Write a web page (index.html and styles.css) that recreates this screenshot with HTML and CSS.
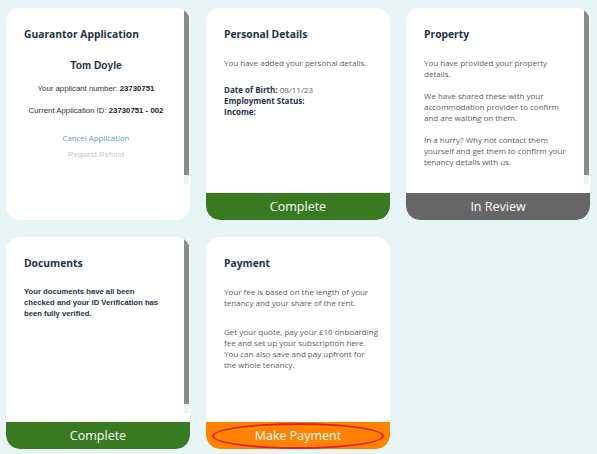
FILE: index.html
```html
<!DOCTYPE html>
<html>
<head>
<meta charset="utf-8">
<link rel="stylesheet" href="styles.css">
</head>
<body>
<div class="grid">
  <div class="card">
    <div class="body">
      <div class="content">
        <h2 class="title">Guarantor Application</h2>
        <div class="applicant">
          <div class="name">Tom Doyle</div>
          <div class="line">Your applicant number: <b>23730751</b></div>
          <div class="line">Current Application ID: <b>23730751 - 002</b></div>
          <div class="link cancel">Cancel Application</div>
          <div class="link refund">Request Refund</div>
        </div>
      </div>
      <div class="scroll"><div class="thumb"></div></div>
    </div>
  </div>

  <div class="card">
    <div class="body">
      <div class="content">
        <h2 class="title">Personal Details</h2>
        <p class="text">You have added your personal details.</p>
        <p class="text wide"><b>Date of Birth:</b> 08/11/23<br><b>Employment Status:</b><br><b>Income:</b></p>
      </div>
    </div>
    <div class="footer green">Complete</div>
  </div>

  <div class="card">
    <div class="body">
      <div class="content">
        <h2 class="title">Property</h2>
        <p class="text">You have provided your property details.</p>
        <p class="text">We have shared these with your accommodation provider to confirm and are waiting on them.</p>
        <p class="text">In a hurry? Why not contact them yourself and get them to confirm your tenancy details with us.</p>
      </div>
      <div class="scroll"><div class="thumb"></div></div>
    </div>
    <div class="footer grey">In Review</div>
  </div>

  <div class="card">
    <div class="body">
      <div class="content">
        <h2 class="title">Documents</h2>
        <p class="text arial">Your documents have all been checked and your ID Verification has been fully verified.</p>
      </div>
      <div class="scroll"><div class="thumb"></div></div>
    </div>
    <div class="footer green">Complete</div>
  </div>

  <div class="card">
    <div class="body">
      <div class="content">
        <h2 class="title">Payment</h2>
        <p class="text">Your fee is based on the length of your tenancy and your share of the rent.</p>
        <p class="text gap">Get your quote, pay your £10 onboarding fee and set up your subscription here. You can also save and pay upfront for the&nbsp;whole tenancy.</p>
      </div>
    </div>
    <div class="footer orange"><span class="circled">Make Payment</span></div>
  </div>
</div>
</body>
</html>
```

FILE: styles.css
```css
html, body {
  margin: 0;
  padding: 0;
}
body {
  background: #e7f5f7;
  font-family: "Open Sans", "Noto Sans", sans-serif;
  width: 597px;
  height: 454px;
  overflow: hidden;
}
.grid {
  display: grid;
  grid-template-columns: repeat(3, 184px);
  grid-template-rows: 212px 212px;
  column-gap: 16px;
  row-gap: 17px;
  padding: 8px 0 0 6px;
}
.card {
  background: #fff;
  border-radius: 14px;
  overflow: hidden;
  display: flex;
  flex-direction: column;
}
.body {
  display: flex;
  height: 176px;
  flex: none;
}
.content {
  flex: 1;
  padding: 19px 10px 0 18px;
  min-width: 0;
}
.scroll {
  width: 5px;
  flex: none;
  background: #efefef;
  margin: 0 1px 0 2px;
  display: flex;
  flex-direction: column;
}
.thumb {
  height: 167px;
  background: #8a8a8a;
}
.title {
  margin: 0 0 16px;
  font-size: 10.3px;
  font-weight: 700;
  color: #1f3347;
  line-height: 14px;
}
.text {
  margin: 0 0 11px;
  font-size: 8px;
  line-height: 11px;
  color: #5a6266;
}
.text b {
  color: #1f3347;
}
.text.wide {
  margin-top: 16px;
}
.text.gap {
  margin-top: 18px;
}
.arial {
  font-family: "Liberation Sans", Arial, sans-serif;
  font-size: 7.7px;
  font-weight: 700;
  color: #1f3347;
  margin-top: 15px;
  margin-right: 8px;
}
.applicant {
  font-family: "Liberation Sans", Arial, sans-serif;
  text-align: center;
  margin-right: 4px;
  padding-top: 3px;
  font-size: 7.8px;
  color: #333;
}
.name {
  font-size: 10.2px;
  font-weight: 700;
  color: #1f3347;
  margin-bottom: 12px;
  line-height: 12px;
}
.line {
  margin-bottom: 12px;
  line-height: 10px;
}
.line b {
  color: #222;
}
.link {
  font-family: "Open Sans", sans-serif;
  line-height: 12px;
}
.cancel {
  margin-top: 16px;
  color: #62a3b3;
  margin-bottom: 5px;
}
.refund {
  color: #c8c8c8;
  font-family: "Liberation Sans", Arial, sans-serif;
}
.footer {
  margin-top: auto;
  height: 27px;
  display: flex;
  align-items: center;
  justify-content: center;
  color: #fff;
  font-size: 12.5px;
  border-radius: 0 0 14px 14px;
}
.green { background: #377a1f; }
.grey { background: #666; }
.orange { background: #ff8300; }
.circled {
  position: relative;
  padding: 2px 8px;
}
.circled::after {
  content: "";
  position: absolute;
  left: -35px;
  right: -35px;
  top: -2px;
  bottom: -3px;
  border: 2px solid #e0202a;
  border-radius: 50%;
}
```
